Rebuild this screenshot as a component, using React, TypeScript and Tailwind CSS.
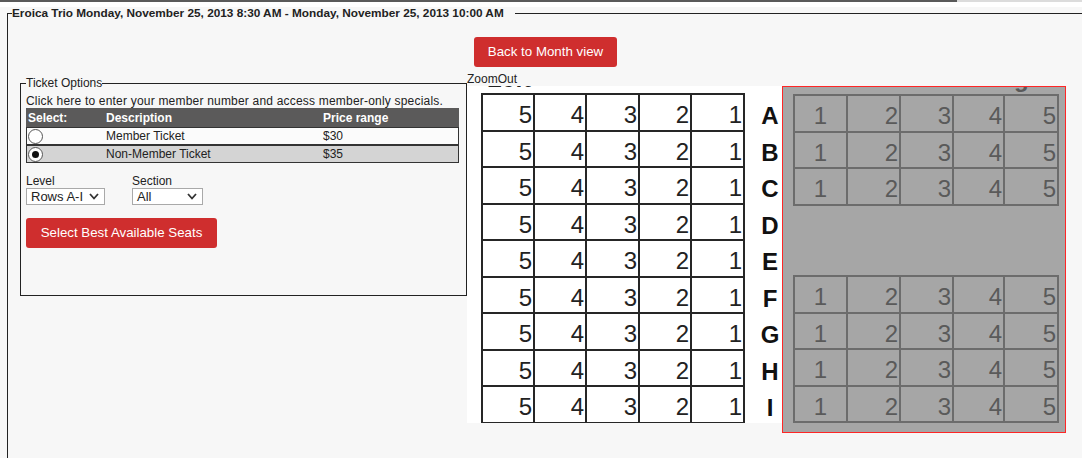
import React from "react";

const leftRows = ["A", "B", "C", "D", "E", "F", "G", "H", "I"];
const leftCols = [
  { w: "w-[52px]", n: "5" },
  { w: "w-[52px]", n: "4" },
  { w: "w-[53px]", n: "3" },
  { w: "w-[52px]", n: "2" },
  { w: "w-[53px]", n: "1" },
];
const rightCols = [
  { w: "w-[53px]", n: "1", center: true },
  { w: "w-[53px]", n: "2", center: false },
  { w: "w-[53px]", n: "3", center: false },
  { w: "w-[51px]", n: "4", center: false },
  { w: "w-[54px]", n: "5", center: false },
];

function Chevron() {
  return (
    <svg width="10" height="7" viewBox="0 0 10 7" className="shrink-0">
      <path d="M1 1 L5 5.5 L9 1" fill="none" stroke="#333" strokeWidth="1.8" />
    </svg>
  );
}

function Radio({ checked }: { checked?: boolean }) {
  return (
    <div className="w-[15px] h-[15px] rounded-full border border-[#555] bg-white flex items-center justify-center ml-[1px]">
      {checked && <div className="w-[7px] h-[7px] rounded-full bg-[#111]" />}
    </div>
  );
}

function RightBlock({ rows }: { rows: number }) {
  return (
    <div className="border-t-2 border-l-2 border-[#6c6c6c] w-fit">
      {Array.from({ length: rows }).map((_, r) => (
        <div key={r} className="flex h-[36.5px]">
          {rightCols.map((c, i) => (
            <div
              key={i}
              className={`${c.w} h-full border-r-2 border-b-2 border-[#6c6c6c] flex items-center pt-[6px] ${
                c.center ? "justify-center" : "justify-end pr-[1px]"
              } text-[24px] leading-[24px] text-[#5a5a5a]`}
            >
              {c.n}
            </div>
          ))}
        </div>
      ))}
    </div>
  );
}

export default function App() {
  return (
    <div className="w-[1082px] h-[458px] overflow-hidden bg-[#f7f7f7] font-['Liberation_Sans',Arial,sans-serif] text-[12px] text-[#222]">
      <div className="h-[2px] flex">
        <div className="w-[957px] bg-[#5a5a5a]" />
        <div className="flex-1 bg-[#dcdcdc]" />
      </div>
      <div className="h-[5px] bg-white" />

      <fieldset className="ml-[7px] w-[1100px] min-h-[480px] border border-[#222] pl-[4px]">
        <legend className="font-bold text-[11.8px] leading-[13px] pr-[11px] text-[#222]">
          Eroica Trio Monday, November 25, 2013 8:30 AM - Monday, November 25, 2013 10:00 AM
        </legend>

        <div className="mt-[17px] ml-[462px] w-[143px] h-[30px] rounded-[3px] bg-[#cf2e2e] text-white text-[13.3px] flex items-center justify-center">
          Back to Month view
        </div>

        <div className="mt-[5px] flex items-start">
          {/* Ticket options */}
          <fieldset className="mt-[4px] ml-[8px] w-[447px] h-[220px] border border-[#222] px-[5px]">
            <legend className="text-[12px] leading-[14px]">Ticket Options</legend>
            <div className="mt-[5px] leading-[13px] tracking-[0.2px]">
              Click here to enter your member number and access member-only specials.
            </div>
            <div className="w-[433px]">
              <div className="h-[19px] bg-[#5b5a5a] text-white font-bold flex items-center">
                <div className="w-[80px] pl-[2px]">Select:</div>
                <div className="w-[217px]">Description</div>
                <div>Price range</div>
              </div>
              <div className="h-[18px] bg-[#fbfbfb] border border-[#333] flex items-center">
                <div className="w-[79px]">
                  <Radio />
                </div>
                <div className="w-[217px]">Member Ticket</div>
                <div>$30</div>
              </div>
              <div className="h-[18px] bg-[#d4d4d4] border border-[#333] flex items-center">
                <div className="w-[79px]">
                  <Radio checked />
                </div>
                <div className="w-[217px]">Non-Member Ticket</div>
                <div>$35</div>
              </div>
            </div>

            <div className="mt-[11px] flex">
              <div className="w-[106px]">
                <div className="leading-[14px]">Level</div>
                <div className="w-[79px] h-[17px] border border-[#a9a9a9] bg-white flex items-center pl-[4px] pr-[5px] text-[13px]">
                  <span className="flex-1">Rows A-I</span>
                  <Chevron />
                </div>
              </div>
              <div>
                <div className="leading-[14px]">Section</div>
                <div className="w-[71px] h-[17px] border border-[#a9a9a9] bg-white flex items-center pl-[4px] pr-[5px] text-[13px]">
                  <span className="flex-1">All</span>
                  <Chevron />
                </div>
              </div>
            </div>

            <div className="mt-[13px] w-[191px] h-[30px] rounded-[3px] bg-[#cf2e2e] text-white text-[13.3px] flex items-center justify-center">
              Select Best Available Seats
            </div>
          </fieldset>

          {/* Seat map */}
          <div className="relative w-[620px]">
            <div className="leading-[14px]">ZoomOut</div>
            <div className="relative w-[315px] h-[337px] bg-white overflow-hidden pl-[14px] pt-[7px]">
              <div className="absolute left-[20px] top-[-19px] text-[24px] leading-[24px] font-bold text-[#222]">
                Left
              </div>
              <div className="flex">
                <div className="border-t-2 border-l-2 border-[#262626]">
                  {leftRows.map((r) => (
                    <div key={r} className="flex h-[36.5px]">
                      {leftCols.map((c, i) => (
                        <div
                          key={i}
                          className={`${c.w} h-full border-r-2 border-b-2 border-[#262626] flex items-center justify-end pr-[1px] pt-[6px] text-[24px] leading-[24px] text-[#222]`}
                        >
                          {c.n}
                        </div>
                      ))}
                    </div>
                  ))}
                </div>
                <div className="pt-[2px]">
                  {leftRows.map((r) => (
                    <div
                      key={r}
                      className="w-[50px] h-[36.5px] flex items-center justify-center pt-[6px] text-[24px] leading-[24px] font-bold text-[#111]"
                    >
                      {r}
                    </div>
                  ))}
                </div>
              </div>
            </div>

            <div className="absolute left-[315px] top-[14px] w-[284px] h-[347px] border border-[#ff2626] bg-[#a6a6a6] overflow-hidden pl-[10px] pt-[7px]">
              <div className="absolute left-[207px] top-[-20px] text-[24px] leading-[24px] font-bold text-[#5a5a5a]">
                Right
              </div>
              <RightBlock rows={3} />
              <div className="mt-[69.5px]">
                <RightBlock rows={4} />
              </div>
            </div>
          </div>
        </div>
      </fieldset>
    </div>
  );
}
